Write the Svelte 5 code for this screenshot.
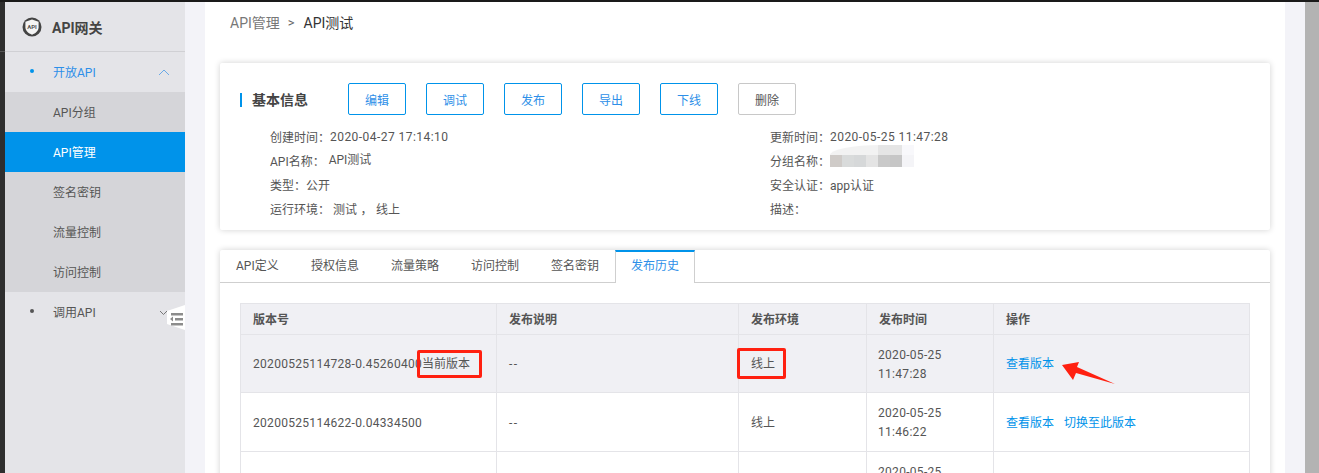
<script>
  let menu = ["API分组", "API管理", "签名密钥", "流量控制", "访问控制"];
  let actions = ["编辑", "调试", "发布", "导出", "下线", "删除"];
  let tabs = ["API定义", "授权信息", "流量策略", "访问控制", "签名密钥", "发布历史"];
  let blur = ["#cfcbc8", "#d9dbdb", "#d6d8d9", "#e4e4e4", "#c9c9c9", "#c6c6c6", "#f4f4f7"];
  let rows = [
    { version: "20200525114728-0.45260400", current: true, date: "2020-05-25", time: "11:47:28" },
    { version: "20200525114622-0.04334500", date: "2020-05-25", time: "11:46:22", rollback: true },
    { version: "", date: "2020-05-25", time: "\u00a0", empty: true }
  ];
</script>

<div class="page">
  <div class="topbar"></div>
  <div class="frame">
    <div class="strip"></div>
    <aside class="sidebar">
      <div class="logo">
        <svg width="20" height="20" viewBox="0 0 20 20">
          <circle cx="10" cy="10" r="9.5" fill="#444"/>
          <path d="M10 2.4l6.6 2.3v5.6c0 3.6-3 6-6.6 7.4-3.6-1.4-6.6-3.8-6.6-7.4V4.7z" fill="#f4f4f4"/>
          <text x="10" y="12" font-size="6" text-anchor="middle" fill="#555" font-family="Roboto, sans-serif">API</text>
        </svg>
        <span>API网关</span>
      </div>
      <div class="group open">
        <i class="dot"></i><span>开放API</span>
        <svg class="chev" width="12" height="7" viewBox="0 0 12 7"><path d="M1 6l5-5 5 5" fill="none" stroke="#6aa9e6"/></svg>
      </div>
      {#each menu as item, i}
        <div class="sub" class:active={i === 1}>{item}</div>
      {/each}
      <div class="group">
        <i class="dot grey"></i><span>调用API</span>
      </div>
      <svg class="chev-down" width="9" height="6" viewBox="0 0 9 6"><path d="M1 1l3.5 3.5L8 1" fill="none" stroke="#777"/></svg>
      <svg class="handle" width="18" height="25" viewBox="0 0 18 25">
        <path d="M0 6L18 0v25L0 19z" fill="#fff"/>
        <path d="M4 9h12v2.4H4zM8 14h8v2.4H8zM4 19h12v2.4H4z" fill="#8c8c8c" transform="translate(0 -1)"/>
        <path d="M3 14l3-2.4v4.8z" fill="#8c8c8c"/>
      </svg>
    </aside>

    <div class="gutter">
      <main class="content">
        <div class="crumbs">
          <span class="crumb-link">API管理</span><span class="sep">&gt;</span><span class="crumb-now">API测试</span>
        </div>

        <section class="card info">
          <div class="head">
            <h3>基本信息</h3>
            <div class="btns">
              {#each actions as a, i}
                <button class:plain={i === 5}>{a}</button>
              {/each}
            </div>
          </div>
          <div class="fields">
            <div class="col">
              <div class="field">创建时间：<span class="stamp">2020-04-27 17:14:10</span></div>
              <div class="field">API名称：<span class="raised">API测试</span></div>
              <div class="field">类型：公开</div>
              <div class="field">运行环境：<span class="env">测试 ， 线上</span></div>
            </div>
            <div class="col">
              <div class="field">更新时间：<span class="stamp">2020-05-25 11:47:28</span></div>
              <div class="field">分组名称：<span class="mosaic">{#each blur as c}<b style="background: {c}"></b>{/each}</span></div>
              <div class="field">安全认证：app认证</div>
              <div class="field">描述：</div>
            </div>
          </div>
        </section>

        <section class="card detail">
          <div class="tabs">
            {#each tabs as t, i}
              <div class="tab" class:on={i === 5}>{t}</div>
            {/each}
          </div>
          <div class="table-wrap">
            <table>
              <colgroup>
                <col style="width: 256px" /><col style="width: 242px" /><col style="width: 128px" /><col style="width: 127px" /><col />
              </colgroup>
              <thead>
                <tr><th>版本号</th><th>发布说明</th><th>发布环境</th><th>发布时间</th><th>操作</th></tr>
              </thead>
              <tbody>
                {#each rows as r}
                  <tr class:hl={r.current}>
                    <td><span class="num">{r.version}</span>{#if r.current}当前版本{/if}</td>
                    <td class="dash">{r.empty ? "" : "--"}</td>
                    <td>{r.empty ? "" : "线上"}</td>
                    <td class="num">{r.date}<br />{r.time}</td>
                    <td>
                      {#if !r.empty}<span class="link">查看版本</span>{/if}
                      {#if r.rollback}<span class="link second">切换至此版本</span>{/if}
                    </td>
                  </tr>
                {/each}
              </tbody>
            </table>
          </div>
        </section>
      </main>
    </div>
    <div class="scrollbar"></div>
  </div>

  <!-- screenshot annotations -->
  <div class="mark mark-a"></div>
  <div class="mark mark-b"></div>
  <svg class="arrow" width="60" height="28" viewBox="0 0 60 28">
    <path d="M2 5L19 2l-2 5 38 17-39-11-3 7z" fill="#ff2010"/>
  </svg>
</div>

<style>
  :global(body) {
    margin: 0;
    background: #f3f3f8;
  }

  .page {
    position: relative;
    height: 473px;
    overflow: hidden;
    font-family: Roboto, "Noto Sans CJK SC", sans-serif;
    font-size: 12px;
    color: #555;
  }

  .topbar {
    height: 2px;
    background: #1a1a1a;
  }

  .frame {
    display: flex;
    height: 471px;
  }

  .strip {
    width: 5px;
    background: linear-gradient(#2e2e2e 49px, #555 49px, #555 50px, #2e2e2e 50px);
  }

  .sidebar {
    position: relative;
    width: 180px;
    background: #e4e4e8;
    flex: none;
  }

  .logo {
    display: flex;
    align-items: center;
    gap: 10px;
    height: 49px;
    padding-left: 17px;
    border-bottom: 1px solid #d0d0d4;
    font-size: 14px;
    font-weight: 700;
    color: #444;
  }

  .group {
    display: flex;
    align-items: center;
    height: 40px;
    padding-left: 25px;
    padding-bottom: 2px;
    box-sizing: border-box;
    position: relative;
  }

  .group.open {
    color: #2d8fe8;
  }

  .dot {
    width: 4px;
    height: 4px;
    border-radius: 50%;
    background: #0093ea;
    margin-right: 19px;
  }

  .dot.grey {
    background: #555;
  }

  .chev {
    position: absolute;
    right: 15px;
    top: 17px;
  }

  .chev-down {
    position: absolute;
    left: 154px;
    top: 308px;
  }

  .handle {
    position: absolute;
    right: 0;
    top: 303px;
  }

  .sub {
    height: 40px;
    line-height: 42px;
    padding-left: 48px;
    background: #d5d5d9;
  }

  .sub.active {
    background: #0093ea;
    color: #fff;
  }

  .gutter {
    flex: 1;
    padding: 0 20px;
    min-width: 0;
  }

  .content {
    height: 100%;
    background: #fff;
    padding: 0 15px;
    overflow: hidden;
  }

  .crumbs {
    display: flex;
    align-items: center;
    height: 40px;
    padding-left: 10px;
    font-size: 14px;
    margin-bottom: 21px;
  }

  .crumb-link {
    color: #777;
  }

  .sep {
    margin: 0 9px 0 8px;
    color: #666;
    font-size: 13px;
  }

  .crumb-now {
    color: #333;
  }

  .card {
    background: #fff;
    border-radius: 2px;
    box-shadow: 0 0 6px rgba(0, 0, 0, 0.18);
  }

  .info {
    height: 167px;
    margin-bottom: 20px;
    padding: 20px;
    box-sizing: border-box;
  }

  .head {
    display: flex;
    align-items: center;
    height: 32px;
  }

  h3 {
    width: 96px;
    margin: 2px 12px 0 0;
    padding-left: 10px;
    box-sizing: border-box;
    border-left: 2px solid #0093ea;
    font-size: 14px;
    line-height: 14px;
    color: #444;
  }

  .btns {
    display: flex;
    gap: 20px;
  }

  button {
    width: 58px;
    height: 32px;
    padding: 0;
    background: #fff;
    border: 1px solid #0093ea;
    border-radius: 2px;
    color: #2d8fe8;
    font: inherit;
  }

  button.plain {
    border-color: #c8c8c8;
    color: #555;
  }

  .fields {
    display: flex;
    margin-top: 9px;
    padding-left: 30px;
  }

  .col {
    width: 500px;
    flex: none;
  }

  .field {
    display: flex;
    align-items: center;
    height: 24px;
    white-space: pre;
  }

  .stamp {
    letter-spacing: 0.45px;
    padding-top: 1px;
  }

  .num {
    letter-spacing: 0.3px;
  }

  .dash {
    letter-spacing: 1.5px;
  }

  .raised {
    margin: -3px 0 0 4px;
  }

  .env {
    margin-left: 3px;
    word-spacing: 0.5px;
  }

  .mosaic {
    position: relative;
    display: flex;
    height: 12px;
    margin-top: 2px;
  }

  .mosaic::before {
    content: '';
    position: absolute;
    left: 0;
    right: 0;
    bottom: 100%;
    height: 10px;
    border-top-left-radius: 60% 100%;
    background: linear-gradient(90deg, #f2f2f2 57%, #e5e5e5 57%, #e5e5e5 86%, #f8f8fb 86%);
  }

  .mosaic b {
    width: 12px;
    height: 12px;
  }

  .detail {
    min-height: 300px;
  }

  .tabs {
    display: flex;
    height: 32px;
    border-bottom: 1px solid #cfcfcf;
  }

  .tab {
    padding: 0 17px 0 16px;
    line-height: 32px;
    box-sizing: border-box;
    height: 33px;
    margin-right: -1px;
  }

  .tab:first-child {
    width: 76px;
  }

  .tab.on {
    width: 80px;
    padding: 0 15px;
    background: #fff;
    color: #2d8fe8;
    border-top: 2px solid #0093ea;
    border-left: 1px solid #cfcfcf;
    border-right: 1px solid #cfcfcf;
    line-height: 29px;
  }

  .table-wrap {
    padding: 20px;
  }

  table {
    width: 100%;
    table-layout: fixed;
    border-collapse: collapse;
  }

  th, td {
    border: 1px solid #e4e4e8;
    padding: 0 12px;
    text-align: left;
    line-height: 19px;
  }

  th {
    height: 31px;
    padding-top: 2px;
    box-sizing: border-box;
    background: #f0f0f4;
    font-weight: 700;
    color: #555;
  }

  td {
    height: 58px;
    padding-top: 2px;
    box-sizing: border-box;
    white-space: nowrap;
  }

  tr:nth-child(2) td {
    height: 59px;
  }

  td.num {
    padding-left: 11px;
  }

  tr.hl td {
    background: #f0f0f4;
  }

  .link {
    color: #0093ea;
  }

  .second {
    margin-left: 7px;
  }

  .mark {
    position: absolute;
    box-sizing: border-box;
    border: 3px solid #ff2010;
    border-radius: 2px;
  }

  .mark-a {
    left: 417px;
    top: 350px;
    width: 65px;
    height: 28px;
  }

  .mark-b {
    left: 737px;
    top: 348px;
    width: 49px;
    height: 31px;
  }

  .arrow {
    position: absolute;
    left: 1060px;
    top: 360px;
  }

  .scrollbar {
    width: 14px;
    background: #b3b3b3;
    flex: none;
  }
</style>
